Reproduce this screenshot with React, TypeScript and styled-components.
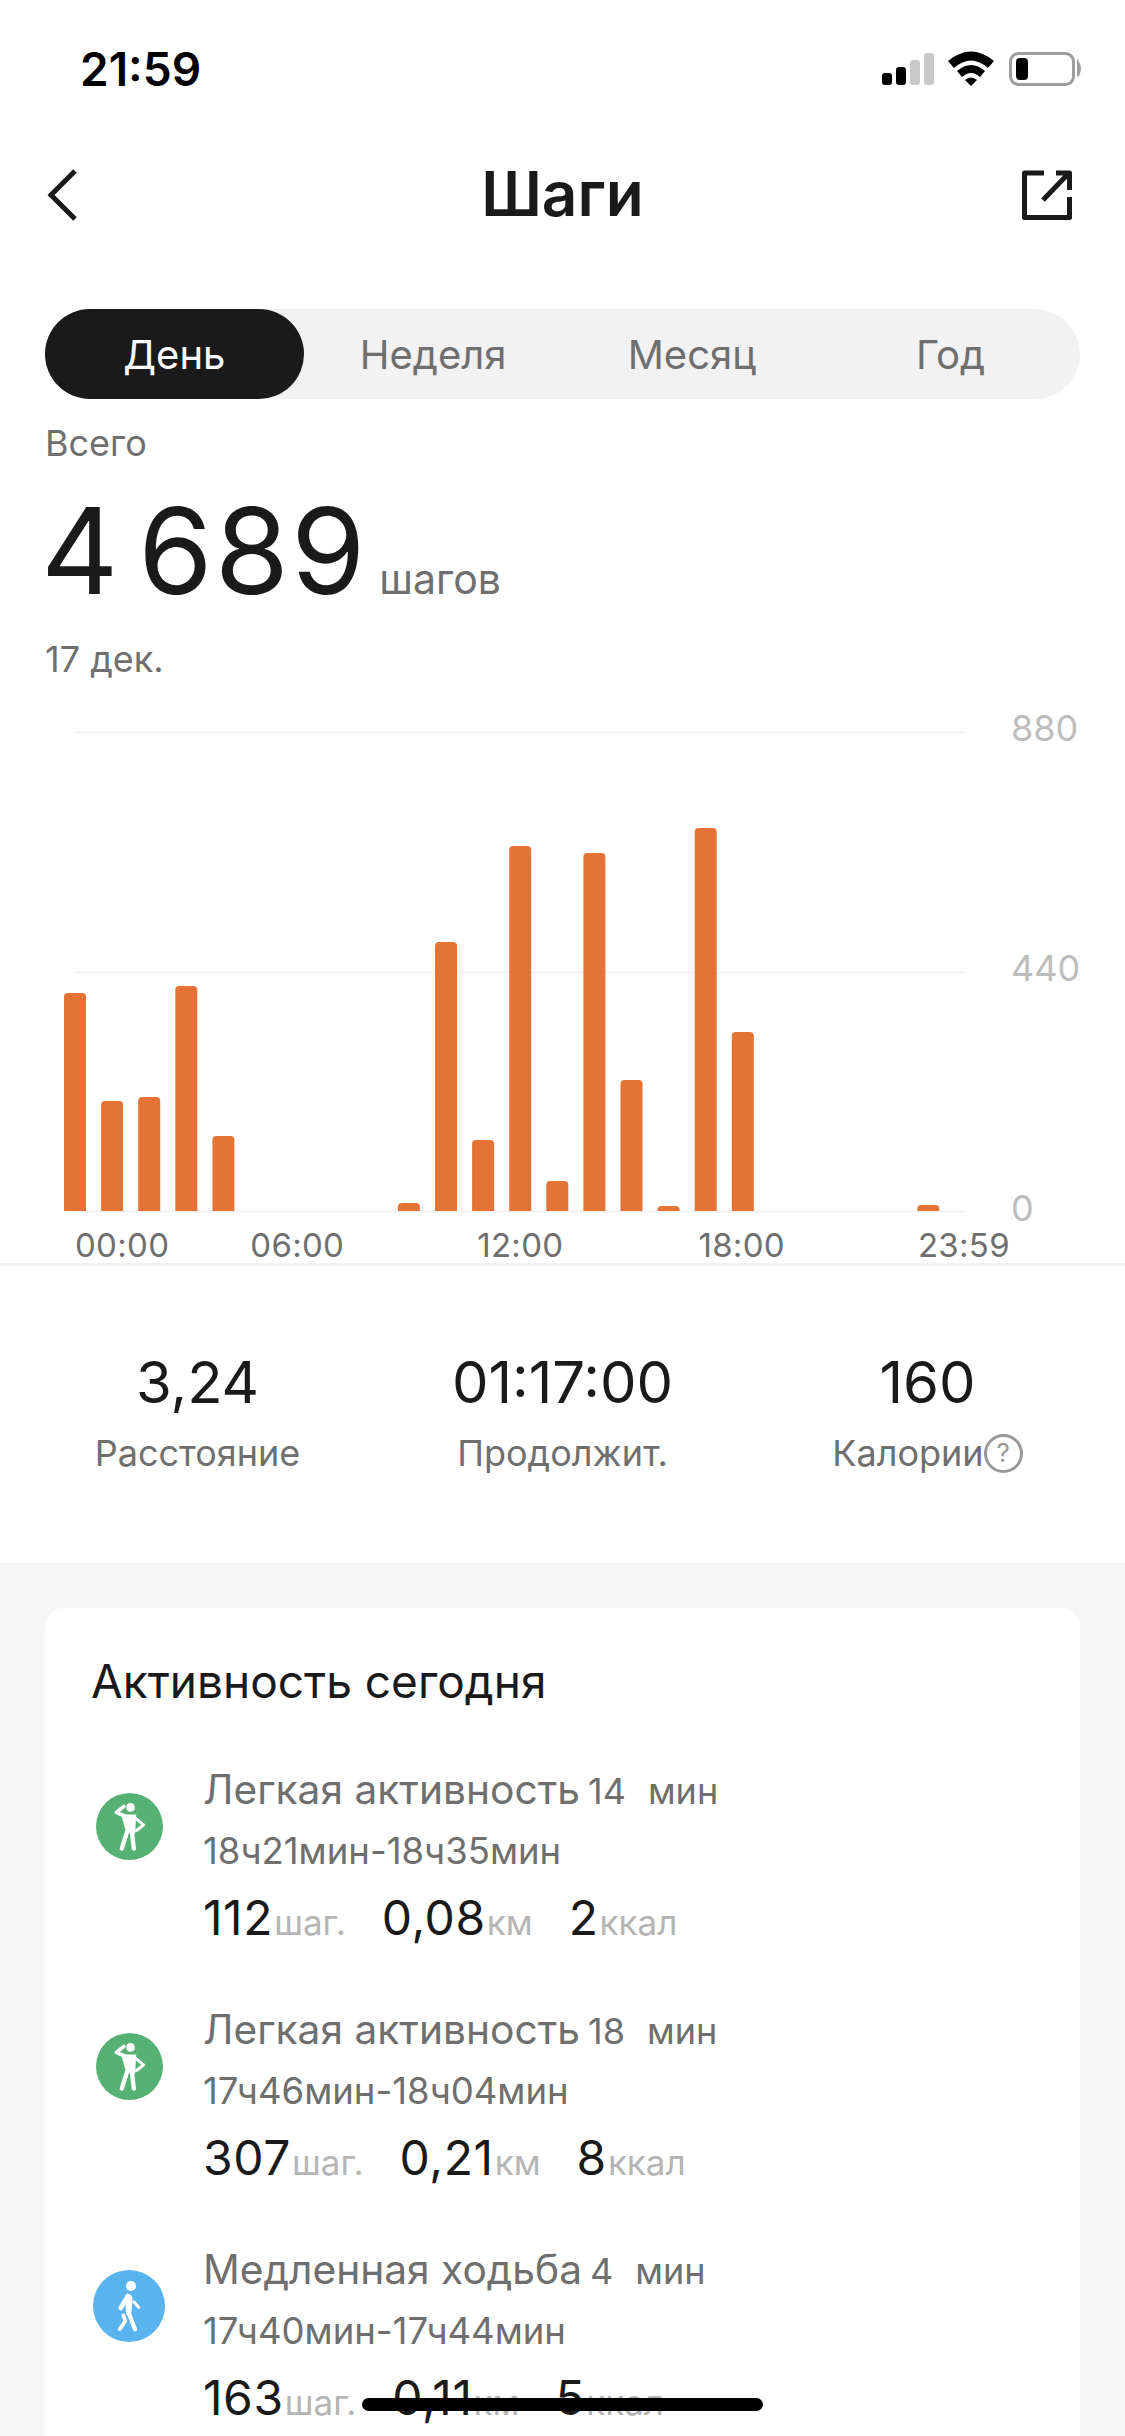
import React from 'react'
import styled, { createGlobalStyle } from 'styled-components'

const BARS = [218, 110, 114, 225, 75, 0, 0, 0, 0, 8, 269, 71, 365, 30, 358, 131, 5, 383, 179, 0, 0, 0, 0, 6]

const AXIS_TIMES = [
  { label: '00:00', gap: 0 },
  { label: '06:00', gap: 81 },
  { label: '12:00', gap: 133 },
  { label: '18:00', gap: 135 },
  { label: '23:59', gap: 133 }
]

const ACTIVITIES = [
  {
    kind: 'light',
    title: 'Легкая активность',
    amount: '14',
    range: '18ч21мин-18ч35мин',
    steps: '112',
    distance: '0,08',
    calories: '2'
  },
  {
    kind: 'light',
    title: 'Легкая активность',
    amount: '18',
    range: '17ч46мин-18ч04мин',
    steps: '307',
    distance: '0,21',
    calories: '8'
  },
  {
    kind: 'walk',
    title: 'Медленная ходьба',
    amount: '4',
    range: '17ч40мин-17ч44мин',
    steps: '163',
    distance: '0,11',
    calories: '5'
  }
]

const GlobalStyle = createGlobalStyle`
  html, body {
    margin: 0;
    padding: 0;
    background: #fff;
  }
  body {
    font-family: Inter, "Liberation Sans", sans-serif;
    color: #1a1a1a;
  }
`

function LightIcon() {
  return (
    <svg width="67" height="67" viewBox="77 70 200 200">
      <circle cx="177" cy="170" r="100" fill="#56b274" />
      <circle cx="180" cy="113" r="13" fill="#fff" />
      <path d="M165 140 L138 128 L160 110" fill="none" stroke="#fff" strokeWidth="11" strokeLinejoin="round" strokeLinecap="round" />
      <path d="M152 134 L197 134 L194 190 L168 190 Z" fill="#fff" />
      <path d="M170 185 L154 236 M184 185 L190 236" fill="none" stroke="#fff" strokeWidth="13" strokeLinecap="round" />
      <path d="M195 145 L219 165 L198 182" fill="none" stroke="#fff" strokeWidth="9" strokeLinejoin="round" strokeLinecap="round" />
    </svg>
  )
}

function WalkIcon() {
  return (
    <svg width="72" height="72" viewBox="69 62 216 216">
      <circle cx="177" cy="170" r="108" fill="#58b3ef" />
      <circle cx="183" cy="110" r="15" fill="#fff" />
      <path d="M174 140 L152 176" fill="none" stroke="#fff" strokeWidth="14" strokeLinecap="round" />
      <path d="M165 138 Q185 130 188 148 L184 192 L168 196 Z" fill="#fff" />
      <path d="M176 190 L195 240" fill="none" stroke="#fff" strokeWidth="13" strokeLinecap="round" />
      <path d="M160 198 L166 215 L149 240" fill="none" stroke="#fff" strokeWidth="11" strokeLinecap="round" strokeLinejoin="round" />
      <path d="M192 158 L206 174" fill="none" stroke="#fff" strokeWidth="9" strokeLinecap="round" />
    </svg>
  )
}

export default function App() {
  return (
    <Screen>
      <GlobalStyle />
      <StatusBar>
        <Clock>21:59</Clock>
        <svg width="202" height="36" viewBox="882 51 202 36">
          <rect x="882" y="73" width="10" height="12" rx="3" fill="#000" />
          <rect x="896" y="67" width="10" height="18" rx="3" fill="#000" />
          <rect x="910" y="60" width="10" height="25" rx="3" fill="#c9c9c9" />
          <rect x="924" y="53" width="10" height="32" rx="3" fill="#c9c9c9" />
          <path d="M948 61 Q971 42 994 61 L988 68 Q971 53 954 68 Z" fill="#000" />
          <path d="M957 71 Q971 59 985 71 L980 77 Q971 69 962 77 Z" fill="#000" />
          <path d="M965 80 Q971 75 977 80 L971 86 Z" fill="#000" />
          <rect x="1010.5" y="53.5" width="63" height="31" rx="8" fill="none" stroke="#9e9e9e" strokeWidth="3" />
          <rect x="1016" y="58" width="12" height="22" rx="4" fill="#000" />
          <path d="M1078 62 Q1082 68 1078 76 Z" fill="#9e9e9e" stroke="#9e9e9e" strokeWidth="2" />
        </svg>
      </StatusBar>

      <NavBar>
        <svg width="30" height="54" viewBox="47 171 30 54">
          <path d="M75 174 L51 198 L75 222" fill="none" stroke="#1a1a1a" strokeWidth="5" />
        </svg>
        <NavTitle>Шаги</NavTitle>
        <NavAction>
          <svg width="54" height="54" viewBox="1020 171 54 54">
            <path
              d="M1044 176 H1024.5 V220.5 H1069.5 V200 M1056 176 H1069.5 V193 M1043 203 L1069 176"
              fill="none"
              stroke="#1a1a1a"
              strokeWidth="5"
              strokeLinejoin="round"
            />
          </svg>
        </NavAction>
      </NavBar>

      <Tabs>
        <Tab $active>День</Tab>
        <Tab>Неделя</Tab>
        <Tab>Месяц</Tab>
        <Tab>Год</Tab>
      </Tabs>

      <Summary>
        <SummaryCaption>Всего</SummaryCaption>
        <Total>
          <TotalValue>4 689</TotalValue>
          <TotalUnit>шагов</TotalUnit>
        </Total>
        <SummaryCaption>17 дек.</SummaryCaption>
      </Summary>

      <Chart>
        <svg width="920" height="520" viewBox="45 708 920 520">
          <path d="M75 732.5 H965 M75 972.5 H965 M75 1211.5 H965" stroke="#f2f2f2" strokeWidth="2" fill="none" />
          {BARS.map((height, idx) =>
            height > 0 ? (
              <path
                key={idx}
                d={`M${64 + idx * 37.1} 1211 V${1211 - height + 4} Q${64 + idx * 37.1} ${1211 - height} ${68 + idx * 37.1} ${1211 - height} H${82 + idx * 37.1} Q${86 + idx * 37.1} ${1211 - height} ${86 + idx * 37.1} ${1211 - height + 4} V1211 Z`}
                fill="#e57335"
              />
            ) : null
          )}
        </svg>
        <YAxis>
          <span>880</span>
          <span>440</span>
          <span>0</span>
        </YAxis>
      </Chart>

      <XAxis>
        {AXIS_TIMES.map(item => (
          <XLabel key={item.label} $gap={item.gap}>{item.label}</XLabel>
        ))}
      </XAxis>

      <Stats>
        <Stat>
          <StatValue>3,24</StatValue>
          <StatLabel>Расстояние</StatLabel>
        </Stat>
        <Stat>
          <StatValue>01:17:00</StatValue>
          <StatLabel>Продолжит.</StatLabel>
        </Stat>
        <Stat>
          <StatValue>160</StatValue>
          <StatLabel>
            Калории
            <HelpMark>?</HelpMark>
          </StatLabel>
        </Stat>
      </Stats>

      <GreySection>
        <Card>
          <CardTitle>Активность сегодня</CardTitle>
          {ACTIVITIES.map((item, idx) => (
            <Activity key={idx}>
              <IconSlot>{item.kind === 'light' ? <LightIcon /> : <WalkIcon />}</IconSlot>
              <div>
                <ActivityTitle>
                  {item.title}
                  <Amount>{item.amount}</Amount>
                  <AmountUnit>мин</AmountUnit>
                </ActivityTitle>
                <ActivityRange>{item.range}</ActivityRange>
                <Metrics>
                  <Metric>{item.steps}<MetricUnit>шаг.</MetricUnit></Metric>
                  <Metric>{item.distance}<MetricUnit>км</MetricUnit></Metric>
                  <Metric>{item.calories}<MetricUnit>ккал</MetricUnit></Metric>
                </Metrics>
              </div>
            </Activity>
          ))}
        </Card>
      </GreySection>

      <HomeIndicator />
    </Screen>
  )
}

const Screen = styled.div`
  position: relative;
  width: 1125px;
  height: 2436px;
  overflow: hidden;
  background: #fff;
`

const StatusBar = styled.div`
  display: flex;
  align-items: center;
  justify-content: space-between;
  height: 138px;
  padding: 0 41px 0 80px;
  box-sizing: border-box;
`

const Clock = styled.div`
  font-size: 46px;
  font-weight: 600;
  color: #000;
`

const NavBar = styled.div`
  display: grid;
  grid-template-columns: 1fr auto 1fr;
  align-items: center;
  height: 114px;
  padding: 0 51px 0 47px;
`

const NavTitle = styled.h1`
  margin: -3px 0 0 4px;
  font-size: 62px;
  font-weight: 600;
  color: #1a1a1a;
`

const NavAction = styled.div`
  display: flex;
  justify-content: flex-end;
`

const Tabs = styled.div`
  display: grid;
  grid-template-columns: repeat(4, 1fr);
  height: 90px;
  margin: 57px 45px 0;
  border-radius: 45px;
  background: #f2f2f2;
`

const Tab = styled.div<{ $active?: boolean }>`
  display: flex;
  align-items: center;
  justify-content: center;
  border-radius: 45px;
  font-size: 40px;
  color: ${p => (p.$active ? '#fff' : '#6f6f6f')};
  background: ${p => (p.$active ? '#1a1a1a' : 'transparent')};
`

const Summary = styled.div`
  display: flex;
  flex-direction: column;
  padding: 23px 45px 0;
`

const SummaryCaption = styled.div`
  font-size: 36px;
  line-height: 42px;
  color: #6f6f6f;
`

const Total = styled.div`
  display: flex;
  align-items: baseline;
  gap: 12px;
  margin: 38px 0 10px -4px;
  line-height: 98px;
`

const TotalValue = styled.span`
  font-size: 120px;
  font-weight: 370;
  letter-spacing: 2px;
  word-spacing: -18px;
  color: #1a1a1a;
`

const TotalUnit = styled.span`
  font-size: 41px;
  color: #6f6f6f;
`

const Chart = styled.div`
  display: flex;
  align-items: stretch;
  height: 520px;
  margin: 28px 0 0 45px;
`

const YAxis = styled.div`
  display: flex;
  flex-direction: column;
  justify-content: space-between;
  margin-left: 46px;
  font-size: 36px;
  line-height: 40px;
  color: #bdbdbd;
`

const XAxis = styled.div`
  display: flex;
  height: 35px;
  padding-left: 75px;
  border-bottom: 3px solid #f2f2f2;
  line-height: 34px;
  font-size: 33px;
  letter-spacing: 0.3px;
  color: #6f6f6f;
`

const XLabel = styled.span<{ $gap: number }>`
  margin-left: ${p => p.$gap}px;
`

const Stats = styled.div`
  display: grid;
  grid-template-columns: repeat(3, 365px);
  height: 297px;
  padding: 78px 15px 0;
  box-sizing: border-box;
`

const Stat = styled.div`
  display: flex;
  flex-direction: column;
  align-items: center;
`

const StatValue = styled.div`
  font-size: 58px;
  font-weight: 400;
  line-height: 76px;
  color: #1a1a1a;
`

const StatLabel = styled.div`
  display: flex;
  align-items: center;
  margin-top: 11px;
  font-size: 36px;
  line-height: 44px;
  color: #6f6f6f;
`

const HelpMark = styled.span`
  display: flex;
  align-items: center;
  justify-content: center;
  width: 33px;
  height: 33px;
  border: 3px solid #999;
  border-radius: 50%;
  font-size: 26px;
  line-height: 1;
  color: #999;
`

const GreySection = styled.div`
  padding: 45px 45px 0;
  height: 900px;
  background: #f6f6f6;
`

const Card = styled.div`
  height: 100%;
  padding: 46px 46px 0;
  border-radius: 20px;
  background: #fff;
`

const CardTitle = styled.h2`
  margin: 0 0 56px;
  font-size: 46px;
  font-weight: 400;
  line-height: 54px;
  color: #1a1a1a;
`

const Activity = styled.div`
  display: flex;
  height: 240px;
`

const IconSlot = styled.div`
  display: flex;
  align-items: center;
  justify-content: center;
  width: 72px;
  height: 124px;
  margin: 0 38px 0 2px;
`

const ActivityTitle = styled.div`
  display: flex;
  align-items: baseline;
  font-size: 40.7px;
  line-height: 52px;
  color: #6f6f6f;
`

const Amount = styled.span`
  margin-left: 8px;
  font-size: 36px;
`

const AmountUnit = styled.span`
  margin-left: 22px;
  font-size: 36px;
`

const ActivityRange = styled.div`
  margin-top: 10px;
  font-size: 36.5px;
  line-height: 48px;
  color: #6f6f6f;
`

const Metrics = styled.div`
  display: flex;
  align-items: baseline;
  gap: 36px;
  margin-top: 11px;
  line-height: 64px;
`

const Metric = styled.span`
  font-size: 48px;
  letter-spacing: 0.6px;
  color: #1a1a1a;
`

const MetricUnit = styled.span`
  margin-left: 1px;
  font-size: 35px;
  letter-spacing: 0;
  color: #b5b5b5;
`

const HomeIndicator = styled.div`
  position: absolute;
  left: 362px;
  bottom: 25px;
  width: 401px;
  height: 13px;
  border-radius: 7px;
  background: #000;
`
